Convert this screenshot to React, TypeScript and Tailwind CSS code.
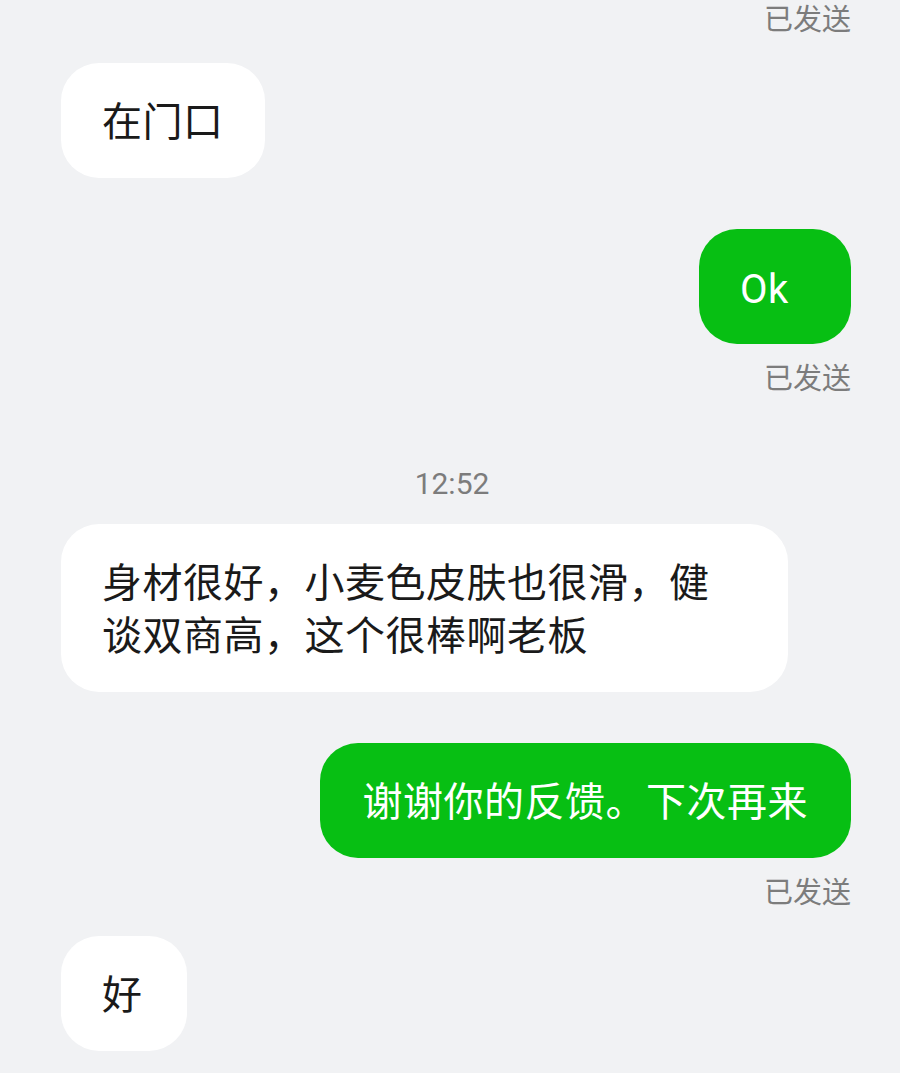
const font = { fontFamily: 'Roboto, "Noto Sans CJK SC", sans-serif' };

function Status({ className = "" }: { className?: string }) {
  return (
    <div className={`self-end text-[29px] leading-[34px] text-[#7c7c7c] ${className}`}>
      已发送
    </div>
  );
}

function Incoming({ text, className = "" }: { text: string; className?: string }) {
  return (
    <div
      className={`self-start max-w-[727px] min-w-[126px] rounded-[38px] bg-white px-[41px] pt-[33px] pb-[29px] text-[40px] leading-[53px] tracking-[0.5px] text-[#1a1a1a] ${className}`}
    >
      {text}
    </div>
  );
}

function Outgoing({ text, className = "" }: { text: string; className?: string }) {
  return (
    <div
      className={`self-end max-w-[727px] rounded-[38px] bg-[#07bf13] px-[43px] text-[40px] leading-[53px] tracking-[0.5px] text-white ${className}`}
    >
      {text}
    </div>
  );
}

export default function App() {
  return (
    <div className="min-h-screen overflow-hidden bg-[#f1f2f4]" style={font}>
      <div className="flex flex-col pl-[61px] pr-[49px]">
        <Status className="mt-[3px]" />
        <Incoming text="在门口" className="mt-[26px]" />
        <Outgoing text="Ok" className="mt-[51px] min-w-[152px] !pl-[41px] pt-[34px] pb-[28px]" />
        <Status className="mt-[18px]" />
        <div className="mt-[71px] self-center pr-[8px] text-[30px] leading-[34px] text-[#7c7c7c]">12:52</div>
        <Incoming text="身材很好，小麦色皮肤也很滑，健谈双商高，这个很棒啊老板" className="mt-[23px]" />
        <Outgoing text="谢谢你的反馈。下次再来" className="mt-[51px] pt-[33px] pb-[29px]" />
        <Status className="mt-[18px]" />
        <Incoming text="好" className="mt-[26px]" />
      </div>
    </div>
  );
}
